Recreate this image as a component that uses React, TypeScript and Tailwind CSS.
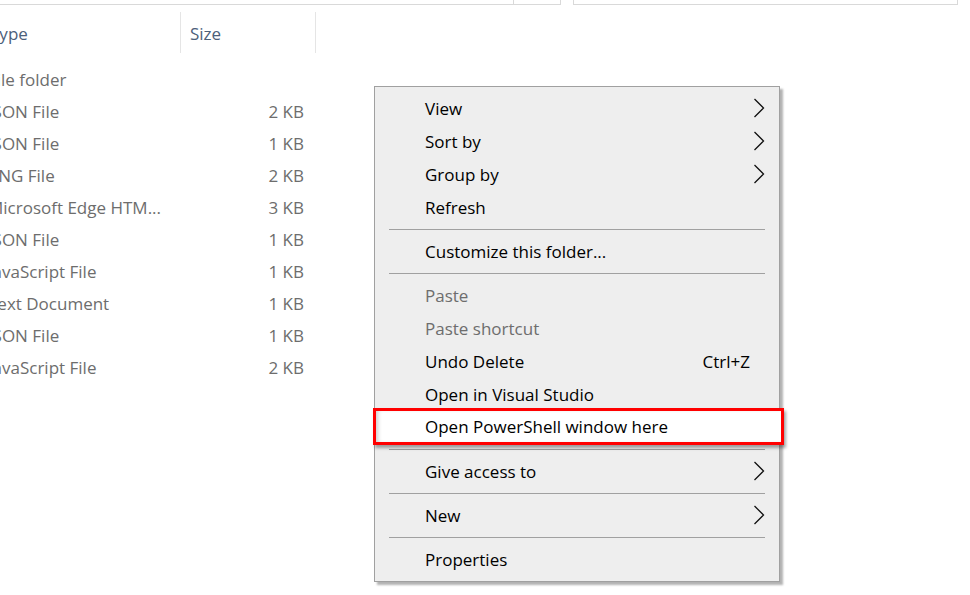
const files = [
  { type: "File folder", size: "" },
  { type: "JSON File", size: "2 KB" },
  { type: "JSON File", size: "1 KB" },
  { type: "PNG File", size: "2 KB" },
  { type: "Microsoft Edge HTM...", size: "3 KB" },
  { type: "JSON File", size: "1 KB" },
  { type: "JavaScript File", size: "1 KB" },
  { type: "Text Document", size: "1 KB" },
  { type: "JSON File", size: "1 KB" },
  { type: "JavaScript File", size: "2 KB" },
];

type MenuEntry =
  | { kind: "sep" }
  | {
      kind: "item";
      label: string;
      sub?: boolean;
      disabled?: boolean;
      shortcut?: string;
      marked?: boolean;
    };

const menu: MenuEntry[] = [
  { kind: "item", label: "View", sub: true },
  { kind: "item", label: "Sort by", sub: true },
  { kind: "item", label: "Group by", sub: true },
  { kind: "item", label: "Refresh" },
  { kind: "sep" },
  { kind: "item", label: "Customize this folder..." },
  { kind: "sep" },
  { kind: "item", label: "Paste", disabled: true },
  { kind: "item", label: "Paste shortcut", disabled: true },
  { kind: "item", label: "Undo Delete", shortcut: "Ctrl+Z" },
  { kind: "item", label: "Open in Visual Studio" },
  { kind: "item", label: "Open PowerShell window here", marked: true },
  { kind: "sep" },
  { kind: "item", label: "Give access to", sub: true },
  { kind: "sep" },
  { kind: "item", label: "New", sub: true },
  { kind: "sep" },
  { kind: "item", label: "Properties" },
];

function Chevron() {
  return (
    <svg width="12" height="20" viewBox="0 0 12 20" className="shrink-0 -mt-[2px]">
      <polyline
        points="1.5,1 10.5,10 1.5,19"
        fill="none"
        stroke="#111"
        strokeWidth="1.3"
      />
    </svg>
  );
}

function ContextMenu() {
  return (
    <div className="absolute left-[374px] top-[86px] w-[406px] border border-[#a0a0a0] bg-[#eeeeee] pt-[5px] pb-[5px] text-[17px] text-black shadow-[3px_3px_2px_rgba(0,0,0,0.3)]">
      {menu.map((entry, i) => {
        if (entry.kind === "sep") {
          return (
            <div key={i} className="mx-[14px] my-[5px] h-px bg-[#a0a0a0]" />
          );
        }
        if (entry.marked) {
          return (
            <div
              key={i}
              className="relative z-10 -mt-[3px] -mb-px -ml-[2px] -mr-[5px] flex h-[37px] items-center border-[3px] border-[#ff0000] bg-white pl-[49px] shadow-[2px_3px_3px_rgba(0,0,0,0.35),inset_4px_0_4px_-2px_rgba(0,0,0,0.2)]"
            >
              {entry.label}
            </div>
          );
        }
        return (
          <div
            key={i}
            className={`flex h-[33px] items-center pl-[50px] pr-[14px] ${
              entry.disabled ? "text-[#6d6d6d]" : ""
            }`}
          >
            <span className="flex-1">{entry.label}</span>
            {entry.shortcut && <span className="mr-[15px]">{entry.shortcut}</span>}
            {entry.sub && <Chevron />}
          </div>
        );
      })}
    </div>
  );
}

export default function App() {
  return (
    <div className="relative h-[595px] w-[970px] overflow-hidden bg-white font-['Segoe_UI','Open_Sans',sans-serif]">
      {/* address bar + search box, cut off at the top */}
      <div className="flex h-[5px]">
        <div className="w-[514px] border-b border-r border-[#d9d9d9]" />
        <div className="w-[47px] border-b border-r border-[#d9d9d9]" />
        <div className="ml-[12px] w-[385px] border-b border-x border-[#d9d9d9]" />
      </div>

      {/* details view */}
      <div className="mt-[7px] flex h-[41px] text-[17px] text-[#4c607a]">
        <div className="flex w-[181px] items-center overflow-hidden border-r border-[#e5e5e5] pt-[2px]">
          <span className="-ml-[10px] whitespace-nowrap">Type</span>
        </div>
        <div className="flex w-[135px] items-center border-r border-[#e5e5e5] pl-[9px] pt-[2px]">
          Size
        </div>
      </div>

      <div className="mt-[11px] text-[17px] text-[#6d6d6d]">
        {files.map((f, i) => (
          <div key={i} className="flex h-[32px] items-center">
            <div className="w-[181px] overflow-hidden whitespace-nowrap">
              <span className="-ml-[12px] inline-block">{f.type}</span>
            </div>
            <div className="w-[123px] text-right">{f.size}</div>
          </div>
        ))}
      </div>

      <ContextMenu />
    </div>
  );
}
